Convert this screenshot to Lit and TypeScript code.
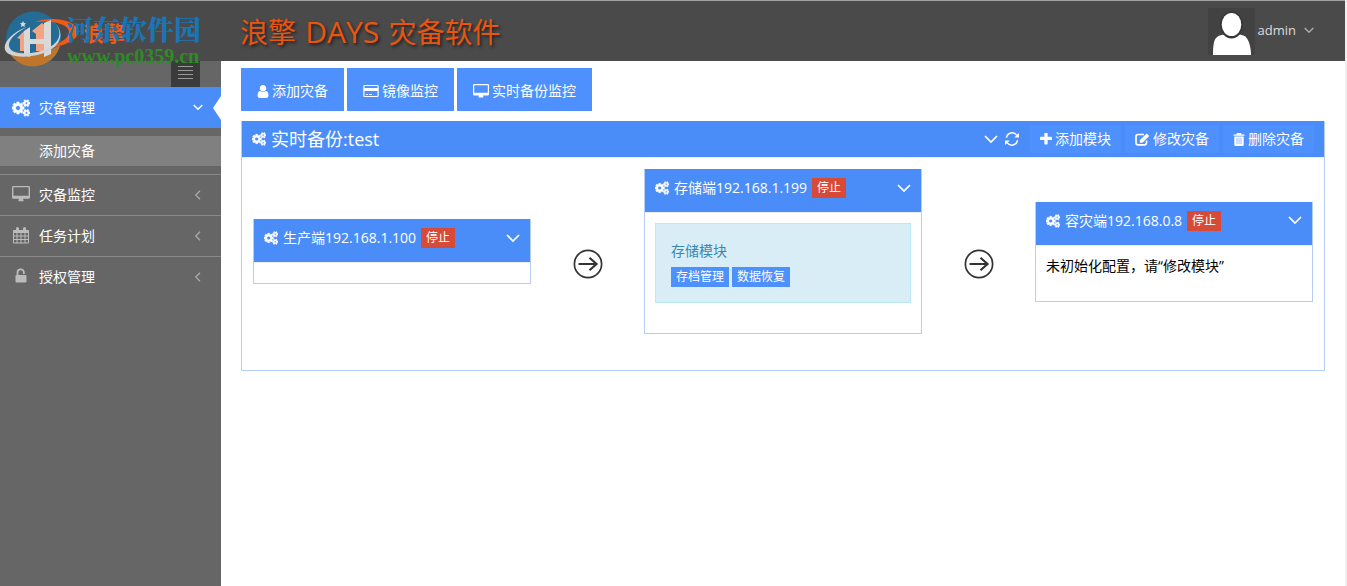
import { LitElement, html, css, svg } from "lit";
import { customElement, property } from "lit/decorators.js";

const COG_BIG = "M896 896q0-106-75-181t-181-75-181 75-75 181 75 181 181 75 181-75 75-181zm768 512q0-52-38-90t-90-38-90 38-38 90q0 53 37.5 90.5t90.5 37.5 90.5-37.5 37.5-90.5zm0-1024q0-52-38-90t-90-38-90 38-38 90q0 53 37.5 90.5t90.5 37.5 90.5-37.5 37.5-90.5zm-384 421v185q0 10-7 19.5t-16 10.5l-155 24q-11 35-32 76 34 48 90 115 7 11 7 20 0 12-7 19-23 30-82.5 89.5t-78.5 59.5q-11 0-21-7l-115-90q-37 19-77 31-11 108-23 155-7 24-30 24h-186q-11 0-20-7.5t-10-17.5l-23-153q-34-10-75-31l-118 89q-7 7-20 7-11 0-21-8-144-133-144-160 0-9 7-19 10-14 41-53t47-61q-23-44-35-82l-152-24q-10-1-17-9.5t-7-19.5v-185q0-10 7-19.5t16-10.5l155-24q11-35 32-76-34-48-90-115-7-11-7-20 0-12 7-20 22-30 82-89t79-59q11 0 21 7l115 90q34-18 77-32 11-108 23-154 7-24 30-24h186q11 0 20 7.5t10 17.5l23 153q34 10 75 31l118-89q8-7 20-7 11 0 21 8 144 133 144 160 0 8-7 19-12 16-42 54t-45 60q23 48 34 82l152 23q10 2 17 10.5t7 19.5zm640 533v140q0 16-149 31-12 27-30 52 51 113 51 138 0 4-4 7-122 71-124 71-8 0-46-47t-52-68q-20 2-30 2t-30-2q-14 21-52 68t-46 47q-2 0-124-71-4-3-4-7 0-25 51-138-18-25-30-52-149-15-149-31v-140q0-16 149-31 13-29 30-52-51-113-51-138 0-4 4-7 4-2 35-20t59-34 30-16q8 0 46 46.5t52 67.5q20-2 30-2t30 2q51-71 92-112l6-2q4 0 124 70 4 3 4 7 0 25-51 138 17 23 30 52 149 15 149 31zm0-1024v140q0 16-149 31-12 27-30 52 51 113 51 138 0 4-4 7-122 71-124 71-8 0-46-47t-52-68q-20 2-30 2t-30-2q-14 21-52 68t-46 47q-2 0-124-71-4-3-4-7 0-25 51-138-18-25-30-52-149-15-149-31v-140q0-16 149-31 13-29 30-52-51-113-51-138 0-4 4-7 4-2 35-20t59-34 30-16q8 0 46 46.5t52 67.5q20-2 30-2t30 2q51-71 92-112l6-2q4 0 124 70 4 3 4 7 0 25-51 138 17 23 30 52 149 15 149 31z";
const USER = "M1536 1399q0 109-62.5 187t-150.5 78h-854q-88 0-150.5-78t-62.5-187q0-85 8.5-160.5t31.5-152 58.5-131 94-89 134.5-34.5q131 128 313 128t313-128q76 0 134.5 34.5t94 89 58.5 131 31.5 152 8.5 160.5zm-256-887q0 159-112.5 271.5t-271.5 112.5-271.5-112.5-112.5-271.5 112.5-271.5 271.5-112.5 271.5 112.5 112.5 271.5z";
const PLUS = "M1600 736v192q0 40-28 68t-68 28h-416v416q0 40-28 68t-68 28h-192q-40 0-68-28t-28-68v-416h-416q-40 0-68-28t-28-68v-192q0-40 28-68t68-28h416v-416q0-40 28-68t68-28h192q40 0 68 28t28 68v416h416q40 0 68 28t28 68z";

/** name -> [viewBox, width, height, drawing] */
const ICONS: Record<string, [string, number, number, unknown]> = {
  cogs: ["0 0 1920 1792", 14, 14, svg`<path fill="currentColor" stroke="currentColor" stroke-width="90" d=${COG_BIG}/>`],
  cogsLarge: ["0 0 1920 1792", 18, 18, svg`<path fill="currentColor" stroke="currentColor" stroke-width="70" d=${COG_BIG}/>`],
  user: ["256 128 1280 1536", 12, 13, svg`<path fill="currentColor" d=${USER}/>`],
  plus: ["192 192 1408 1408", 12, 12, svg`<path fill="currentColor" d=${PLUS}/>`],
  card: ["0 0 16 14", 16, 14, svg`<path fill="currentColor" fill-rule="evenodd" d="M1.5 1h13A1.2 1.2 0 0 1 15.700 2.200v9.600a1.200 1.200 0 0 1-1.200 1.200h-13A1.200 1.200 0 0 1 .3 11.800V2.200A1.200 1.200 0 0 1 1.500 1zM1.500 2v2h13V2zM1.500 7v5h13V7zM3 10h2v1H3zM6 10h3v1H6z"/>`],
  desktop: ["0 0 16 14", 16, 14, svg`<path fill="currentColor" fill-rule="evenodd" d="M1.200 0h13.600A1.200 1.200 0 0 1 16 1.200v9a1.200 1.200 0 0 1-1.200 1.200H10c0 .8.500 1 .500 1.600 0 .300-.200.500-.500.500H6c-.300 0-.500-.200-.500-.500 0-.600.500-.800.500-1.600H1.200A1.200 1.200 0 0 1 0 10.200v-9A1.200 1.200 0 0 1 1.200 0zM1.200 1.200v7.500h13.600V1.200z"/>`],
  desktopLarge: ["0 0 18 18", 18, 18, svg`<path fill="currentColor" fill-rule="evenodd" d="M1.300 0h15.400A1.300 1.300 0 0 1 18 1.300v10.200a1.300 1.300 0 0 1-1.300 1.300H11c0 .9.700 1.200.7 1.800 0 .4-.2.600-.6.600H6.900c-.4 0-.6-.2-.6-.6 0-.6.700-.9.700-1.800H1.300A1.300 1.300 0 0 1 0 11.500V1.300A1.300 1.300 0 0 1 1.300 0zM1.400 1.300v8.400h15.200V1.300z"/>`],
  calendar: ["0 0 18 18", 18, 18, svg`<path fill="currentColor" fill-rule="evenodd" d="M2 3h2V1.500a1.500 1.500 0 0 1 3 0V3h4V1.500a1.500 1.500 0 0 1 3 0V3h2a1 1 0 0 1 1 1v11.500a1 1 0 0 1-1 1H2a1 1 0 0 1-1-1V4a1 1 0 0 1 1-1zM2 6v2.500h2.500V6zM5.500 6v2.500h3V6zM9.500 6v2.500h3V6zM13.500 6v2.500H16V6zM2 9.500v2.500h2.500v-2.500zM5.500 9.500v2.500h3v-2.500zM9.500 9.500v2.500h3v-2.500zM13.500 9.500v2.500H16v-2.500zM2 13v2.500h2.500V13zM5.500 13v2.500h3V13zM9.500 13v2.500h3V13zM13.500 13v2.500H16V13z"/>`],
  unlock: ["0 0 18 18", 18, 18, svg`<path d="M5.500 8V4.500a3.200 3.200 0 0 1 6.400 0V6" fill="none" stroke="currentColor" stroke-width="1.800"/><rect x="3.500" y="7" width="11" height="7.500" rx="1" fill="currentColor"/>`],
  refresh: ["128 128 1536 1536", 14, 14, svg`<path fill="none" stroke="currentColor" stroke-width="165" d="M290 760a620 620 0 0 1 1130-260M1500 1030a620 620 0 0 1-1130 260"/><path fill="currentColor" d="M1664 230v500h-520zM128 1562v-500h520z"/>`],
  edit: ["0 0 15 13", 15, 13, svg`<path d="M11.500 7.500v2.300a2 2 0 0 1-2 2H3a2 2 0 0 1-2-2V3.500a2 2 0 0 1 2-2h6" fill="none" stroke="currentColor" stroke-width="1.700"/><path fill="currentColor" d="M4.800 9.800V7.200L11.700.4l2.600 2.500-6.900 6.900z"/>`],
  trash: ["0 0 12 13", 12, 13, svg`<path fill="currentColor" fill-rule="evenodd" d="M4 0h4l.8 1.600H11.500v1.200H.5V1.600h2.700zM1.300 3.500h9.400v8.200a1.200 1.200 0 0 1-1.200 1.300h-7a1.200 1.200 0 0 1-1.200-1.300z"/><path d="M4 5v6M6 5v6M8 5v6" stroke="#7fb0fb" stroke-width=".8"/>`],
  down: ["0 0 14 9", 14, 9, svg`<path d="M1 1l6 6 6-6" fill="none" stroke="currentColor" stroke-width="1.700"/>`],
  downSmall: ["0 0 10 7", 10, 7, svg`<path d="M.7 1l4.300 4.300L9.300 1" fill="none" stroke="currentColor" stroke-width="1.500"/>`],
  left: ["0 0 10 10", 10, 10, svg`<path d="M7 .8L2.800 5 7 9.200" fill="none" stroke="currentColor" stroke-width="1.300"/>`],
  bars: ["0 0 15 14", 15, 14, svg`<path d="M0 1.500h15M0 5.500h15M0 9.500h15M0 13.500h15" stroke="currentColor"/>`],
  arrow: ["0 0 30 30", 30, 30, svg`<circle cx="15" cy="15" r="13.600" fill="none" stroke="currentColor" stroke-width="1.700"/><path d="M5.500 15h17.500M16.500 8.800L23.500 15l-7 6.200" fill="none" stroke="currentColor" stroke-width="2.200"/>`],
  avatar: ["0 0 47 47", 47, 47, svg`<rect width="47" height="47" fill="#424242"/><path d="M5 47c0-8 .5-14 3-17s6-3.500 9-3.500h13c4 0 7 1 9 4s4 9 4 16.500z" fill="#fff"/><ellipse cx="23.500" cy="17" rx="11.500" ry="13.500" fill="#363636"/><ellipse cx="23.500" cy="16.500" rx="9.800" ry="11.500" fill="#fff"/>`],
};

@customElement("ui-icon")
class UiIcon extends LitElement {
  static styles = css`
    :host { display: inline-flex; flex: none; }
    .glyph { display: block; }
  `;
  @property() name = "";
  render() {
    const [box, w, h, art] = ICONS[this.name];
    return html`<svg class="glyph" viewBox=${box} width=${w} height=${h} aria-hidden="true">${art}</svg>`;
  }
}

@customElement("site-logo")
class SiteLogo extends LitElement {
  static styles = css`
    :host { display: block; width: 221px; flex: none; position: relative; z-index: 2; }
    .art { position: absolute; left: 0; top: 0; overflow: visible; }
    .brand { font: 700 21px "Noto Sans CJK SC", sans-serif; fill: #f05a14; }
    .site { font: 900 27px "Noto Serif CJK SC", "Noto Sans CJK SC", serif; fill: #1b75b5; }
    .url { font: 700 20px "Liberation Serif", serif; fill: #2f8a27; }
  `;
  render() {
    return html`<svg class="art" width="221" height="70" viewBox="0 1 221 70">
      <circle cx="33.500" cy="39" r="27.500" fill="#246b96"/>
      <path d="M8 50a27.500 27.500 0 0 0 52-5C48 53 25 56 8 50z" fill="#c0762a"/>
      <path d="M34 22c20-7 44-1 44 10 0 9-15 14-32 17 12-5 23-10 23-17 0-8-17-12-35-10z" fill="#f05a14"/>
      <path d="M17 38l7-7 6 3v17H20V39zM32 31l10-8 4 3v25H36V34z" fill="#f3a583"/>
      <path d="M24 31l6-4v30l-6-2zM44 23l7-3v34l-7 3zM28 39h18v5H28z" fill="#d9d9d9"/>
      <path d="M56 24c10 14-3 26-25 29-14 2-23-2-22-9 1-6 8-12 18-17C7 34-1 49 9 54c12 6 40 2 49-11 4-7 3-13-2-19z" fill="#cdd3d7"/>
      <path d="M23 21l1 2 2 .3-1.500 1.500.4 2.200-1.900-1-2 1 .4-2.200L20 23.300l2-.3z" fill="#d9d9d9"/>
      <text class="brand" x="83" y="41">浪擎</text>
      <text class="site" x="66" y="40">河东软件园</text>
      <text class="url" x="67" y="63">www.pc0359.cn</text>
    </svg>`;
  }
}

@customElement("server-card")
class ServerCard extends LitElement {
  static styles = css`
    :host { display: block; background: #fff; border: 1px solid #b4cef8; border-top: 0; box-sizing: border-box; min-width: 0; }
    .head { display: flex; align-items: center; height: 20px; padding: 9px 10px 14px 10px; background: #4b8df8; color: #fff; border-bottom: 1px solid #eee; }
    .title { margin: 0 5px 0 5px; font-size: 14px; font-weight: 400; line-height: 20px; white-space: nowrap; }
    .badge { padding: 0 5px; background: #d84a38; font-size: 12px; line-height: 20px; white-space: nowrap; }
    .toggle { margin: 0 0 0 auto; padding: 0; border: 0; background: none; color: inherit; display: flex; }
    .body { padding: 10px; font-size: 14px; line-height: 20px; }
  `;
  @property() heading = "";
  @property() status = "";
  render() {
    return html`
      <div class="head">
        <ui-icon name="cogs"></ui-icon>
        <h3 class="title">${this.heading}</h3>
        <span class="badge">${this.status}</span>
        <button class="toggle" aria-label="折叠"><ui-icon name="down"></ui-icon></button>
      </div>
      <div class="body"><slot></slot></div>`;
  }
}

@customElement("app-root")
class AppRoot extends LitElement {
  static styles = css`
    :host { display: flex; flex-direction: column; min-height: 100vh; box-sizing: border-box; border-right: 2px solid #f0f0f0;
      font-family: "Open Sans", "Noto Sans CJK SC", sans-serif; font-size: 14px; font-weight: 400; line-height: 20px; color: #000; background: #fff; }
    button { font: inherit; cursor: pointer; }
    a { color: inherit; text-decoration: none; }
    .top { display: flex; height: 60px; border-top: 1px solid #a3a3a3; background: #4a4a4a; }
    .name { margin: 0; padding: 11px 0 0 19px; font-size: 28px; font-weight: 400; line-height: 40px; color: #e9550f; text-shadow: 2px 2px 3px #222; white-space: nowrap; }
    .latin { margin: 0 2px; font-size: 30px; }
    .account { display: flex; align-items: flex-start; margin-left: auto; padding: 7px 31px 0 0; border: 0; background: none; color: #ddd; font-size: 13px; }
    .who { margin: 12px 8px 0 3px; line-height: 20px; }
    .caret { margin-top: 19px; color: #aaa; }
    .layout { display: flex; flex: 1; }
    .side { width: 221px; flex: none; background: #666; }
    .burger { display: flex; margin: 0 21px 0 auto; padding: 4px 7px 8px; border: 0; background: #3b3b3b; color: #999; }
    .menu, .sub { list-style: none; margin: 0; padding: 0; }
    .item { border-top: 1px solid #888; }
    .item.active { border-top: 0; }
    .link { display: flex; align-items: center; gap: 9px; height: 40px; padding: 0 18px 0 12px; color: #fff; position: relative; }
    .active > .link { height: 41px; background: #4b8df8; }
    .active > .link::after { content: ""; position: absolute; right: 0; top: 9px; border: 12px solid transparent; border-left: 0; border-right: 8px solid #fff; }
    .ico { display: flex; width: 18px; color: #bbb; }
    .active .ico { color: #fff; }
    .chev { margin-left: auto; color: #aaa; }
    .active .chev { color: #fff; }
    .sub { padding: 8px 0; }
    .sublink { display: block; padding: 5px 0 5px 39px; background: #808080; color: #fff; }
    .main { flex: 1; min-width: 0; padding: 7px 20px 20px; }
    .tools { display: flex; gap: 3px; margin-bottom: 10px; }
    .tool { display: flex; align-items: center; gap: 3px; height: 43px; padding: 3px 16px 0; border: 0; background: #4d90fe; color: #fff; white-space: nowrap; }
    .panel { border: 1px solid #b4cef8; border-top: 0; }
    .bar { display: flex; align-items: center; height: 37px; padding: 0 10px; background: #4b8df8; color: #fff; border-bottom: 1px solid #eee; box-sizing: border-box; }
    .caption { margin: 0 auto 0 5px; font-size: 18px; font-weight: 400; line-height: 26px; white-space: nowrap; }
    .plain { display: flex; padding: 0; margin-right: 7px; border: 0; background: none; color: #fff; }
    .act { display: flex; align-items: center; gap: 3px; height: 28px; margin-left: 4px; padding: 0 10px; border: 0; background: #4d90fe; color: #fff; white-space: nowrap; }
    .flow { display: grid; grid-template-columns: 1fr 113px 1fr 113px 1fr; align-items: center; padding: 11px 11px 36px; }
    .step { justify-self: center; margin-top: 24px; color: #333; }
    .alert { padding: 17px 15px 15px; border: 1px solid #bce8f1; background: #d9edf7; color: #3a87ad; margin-bottom: 20px; }
    .module { margin: 0 0 6px; }
    .minis { display: flex; gap: 3px; }
    .mini { padding: 0 5px; border: 0; background: #4d90fe; color: #fff; font-size: 12px; line-height: 20px; }
    .note { margin: 0 0 15px; }
  `;

  private menu = [
    { icon: "desktopLarge", label: "灾备监控" },
    { icon: "calendar", label: "任务计划" },
    { icon: "unlock", label: "授权管理" },
  ];
  private tools = [
    { icon: "user", label: "添加灾备" },
    { icon: "card", label: "镜像监控" },
    { icon: "desktop", label: "实时备份监控" },
  ];
  private actions = [
    { icon: "plus", label: "添加模块" },
    { icon: "edit", label: "修改灾备" },
    { icon: "trash", label: "删除灾备" },
  ];

  render() {
    return html`
      <header class="top">
        <site-logo></site-logo>
        <h1 class="name">浪擎 <span class="latin">DAYS</span> 灾备软件</h1>
        <button class="account">
          <ui-icon name="avatar"></ui-icon><span class="who">admin</span><ui-icon class="caret" name="downSmall"></ui-icon>
        </button>
      </header>
      <div class="layout">
        <nav class="side">
          <button class="burger" aria-label="菜单"><ui-icon name="bars"></ui-icon></button>
          <ul class="menu">
            <li class="item active">
              <a class="link" href="#"><span class="ico"><ui-icon name="cogsLarge"></ui-icon></span>灾备管理<ui-icon class="chev" name="downSmall"></ui-icon></a>
              <ul class="sub"><li><a class="sublink" href="#">添加灾备</a></li></ul>
            </li>
            ${this.menu.map((m) => html`<li class="item">
              <a class="link" href="#"><span class="ico"><ui-icon name=${m.icon}></ui-icon></span>${m.label}<ui-icon class="chev" name="left"></ui-icon></a>
            </li>`)}
          </ul>
        </nav>
        <main class="main">
          <div class="tools">
            ${this.tools.map((t) => html`<button class="tool"><ui-icon name=${t.icon}></ui-icon>${t.label}</button>`)}
          </div>
          <section class="panel">
            <div class="bar">
              <ui-icon name="cogs"></ui-icon>
              <h2 class="caption">实时备份:test</h2>
              <button class="plain" aria-label="折叠"><ui-icon name="down"></ui-icon></button>
              <button class="plain" aria-label="刷新"><ui-icon name="refresh"></ui-icon></button>
              ${this.actions.map((a) => html`<button class="act"><ui-icon name=${a.icon}></ui-icon>${a.label}</button>`)}
            </div>
            <div class="flow">
              <server-card heading="生产端192.168.1.100" status="停止"></server-card>
              <ui-icon class="step" name="arrow"></ui-icon>
              <server-card heading="存储端192.168.1.199" status="停止">
                <div class="alert">
                  <p class="module">存储模块</p>
                  <div class="minis"><button class="mini">存档管理</button><button class="mini">数据恢复</button></div>
                </div>
              </server-card>
              <ui-icon class="step" name="arrow"></ui-icon>
              <server-card heading="容灾端192.168.0.8" status="停止">
                <p class="note">未初始化配置，请“修改模块”</p>
              </server-card>
            </div>
          </section>
        </main>
      </div>`;
  }
}
